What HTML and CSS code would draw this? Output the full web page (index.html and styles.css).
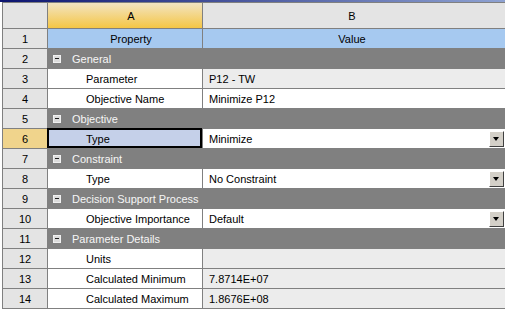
FILE: index.html
```html
<html>
    <head>
        <meta charset="utf-8">
        <title>Properties</title>
        <link rel="stylesheet" href="styles.css">
    </head>
    <body>
        <div class="titlebar"></div>
        <div class="sheet">
            <div class="cell corner"></div>
            <div class="cell hdr hdr-a">A</div>
            <div class="cell hdr hdr-b">B</div>

            <div class="cell num">1</div>
            <div class="cell title title-a">Property</div>
            <div class="cell title title-b">Value</div>

            <div class="cell num">2</div>
            <div class="cell group"><span class="minus"></span>General</div>

            <div class="cell num">3</div>
            <div class="cell prop">Parameter</div>
            <div class="cell val ro">P12 - TW</div>

            <div class="cell num">4</div>
            <div class="cell prop">Objective Name</div>
            <div class="cell val">Minimize P12</div>

            <div class="cell num">5</div>
            <div class="cell group"><span class="minus"></span>Objective</div>

            <div class="cell num num-sel">6</div>
            <div class="cell prop sel">Type</div>
            <div class="cell val">Minimize<span class="drop"></span></div>

            <div class="cell num">7</div>
            <div class="cell group"><span class="minus"></span>Constraint</div>

            <div class="cell num">8</div>
            <div class="cell prop">Type</div>
            <div class="cell val">No Constraint<span class="drop"></span></div>

            <div class="cell num">9</div>
            <div class="cell group"><span class="minus"></span>Decision Support Process</div>

            <div class="cell num">10</div>
            <div class="cell prop">Objective Importance</div>
            <div class="cell val">Default<span class="drop"></span></div>

            <div class="cell num">11</div>
            <div class="cell group"><span class="minus"></span>Parameter Details</div>

            <div class="cell num">12</div>
            <div class="cell prop">Units</div>
            <div class="cell val ro"></div>

            <div class="cell num">13</div>
            <div class="cell prop">Calculated Minimum</div>
            <div class="cell val ro">7.8714E+07</div>

            <div class="cell num">14</div>
            <div class="cell prop">Calculated Maximum</div>
            <div class="cell val ro">1.8676E+08</div>
        </div>
    </body>
</html>
```

FILE: styles.css
```css
body {
    margin: 0;
    background: #fff;
    overflow: hidden;
    font-family: "Liberation Sans", Arial, sans-serif;
    font-size: 11px;
    color: #000;
}
.titlebar {
    height: 2px;
    background: linear-gradient(to right, #0c1470, #8ea2d2);
}
.sheet {
    margin-left: 2px;
    width: 503px;
    display: grid;
    grid-template-columns: 45px 155px 1fr;
    grid-auto-rows: 20px;
    grid-template-rows: 26px;
    border-left: 1px solid #808080;
    border-top: 1px solid #808080;
    box-sizing: border-box;
}
.cell {
    box-sizing: border-box;
    border-right: 1px solid #808080;
    border-bottom: 1px solid #808080;
    display: flex;
    align-items: center;
    white-space: nowrap;
    position: relative;
}
.corner {
    background: #e4e4e4;
}
.hdr {
    justify-content: center;
}
.hdr-a {
    background: linear-gradient(#f2e4c2, #f5c645);
    padding-left: 12px;
}
.hdr-b {
    background: #e4e4e4;
    border-right: none;
    padding-right: 4px;
}
.num {
    background: #e4e4e4;
    justify-content: center;
}
.num-sel {
    background: #f0d48c;
}
.title {
    background: #a6c9f0;
    justify-content: center;
}
.title-a {
    padding-left: 12px;
}
.title-b {
    border-right: none;
    padding-right: 4px;
}
.group {
    grid-column: span 2;
    background: #808080;
    color: #f6f6f6;
    border-right: none;
    padding-left: 5px;
}
.minus {
    width: 8px;
    height: 8px;
    box-sizing: border-box;
    border: 1px solid #f0f0f0;
    background: #dcdcdc;
    margin-right: 11px;
    position: relative;
}
.minus::after {
    content: "";
    position: absolute;
    left: 1px;
    top: 2px;
    width: 4px;
    height: 1px;
    background: #202020;
}
.prop {
    background: #fff;
    padding-left: 38px;
}
.sel {
    background: #c5d0e9;
}
.sel::after {
    content: "";
    position: absolute;
    left: -1px;
    top: -1px;
    right: 0;
    bottom: 0;
    border: 2px solid #000;
}
.val {
    background: #fff;
    border-right: none;
    padding-left: 6px;
    justify-content: space-between;
}
.ro {
    background: #ececec;
}
.drop {
    width: 15px;
    height: 16px;
    box-sizing: border-box;
    margin-right: 1px;
    background: #d4d0c8;
    border-top: 1px solid #fff;
    border-left: 1px solid #fff;
    border-right: 1px solid #404040;
    border-bottom: 1px solid #404040;
    position: relative;
}
.drop::after {
    content: "";
    position: absolute;
    left: 3px;
    top: 5px;
    border-left: 3.5px solid transparent;
    border-right: 3.5px solid transparent;
    border-top: 4px solid #000;
}
```
